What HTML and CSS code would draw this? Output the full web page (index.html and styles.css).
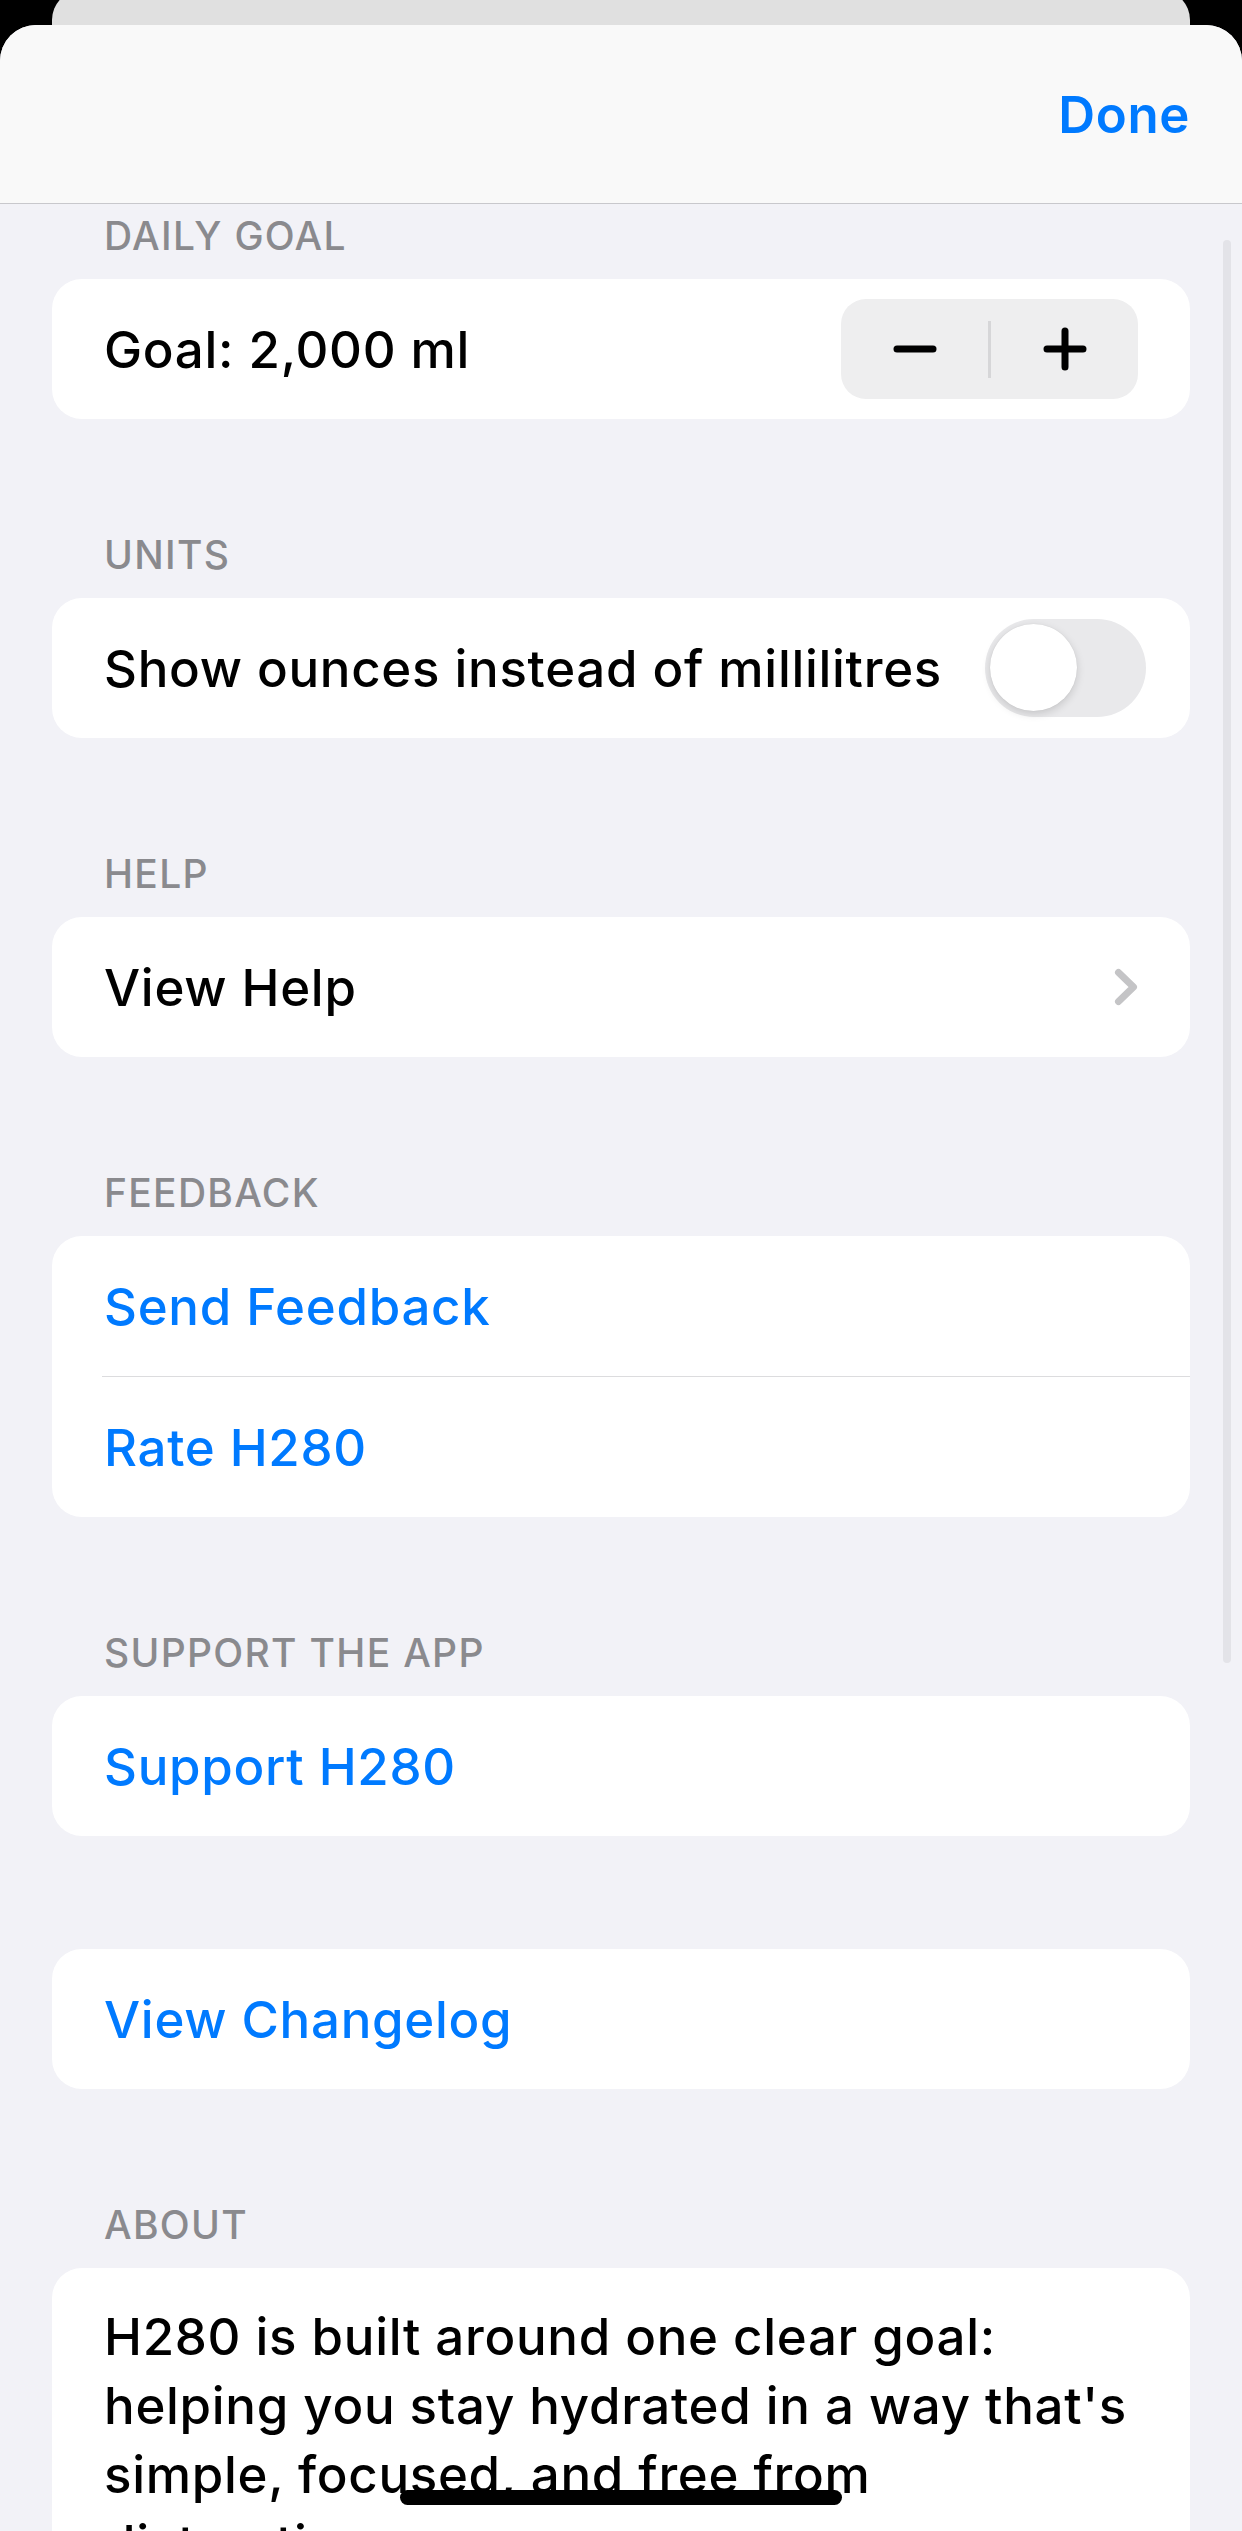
FILE: index.html
```html
<!DOCTYPE html>
<html lang="en">
<head>
  <meta charset="UTF-8" />
  <title>Settings – H280</title>
  <link rel="stylesheet" href="styles.css">
</head>
<body>
  <div class="back-sheet"></div>
  <div class="sheet">
    <div class="nav"><span class="done">Done</span></div>
    <div class="scroll-bar"></div>

    <div class="content">
      <!-- Daily goal -->
      <div class="section-title first">DAILY GOAL</div>
      <div class="card">
        <div class="row">
          <span>Goal: 2,000 ml</span>
          <div class="stepper">
            <span class="step">
              <svg width="44" height="44" viewBox="0 0 44 44"><path d="M4 22H40" stroke="#000" stroke-width="7" stroke-linecap="round"/></svg>
            </span>
            <span class="step-sep"></span>
            <span class="step">
              <svg width="44" height="44" viewBox="0 0 44 44"><path d="M4 22H40M22 4V40" stroke="#000" stroke-width="7" stroke-linecap="round"/></svg>
            </span>
          </div>
        </div>
      </div>

      <!-- Units -->
      <div class="section-title">UNITS</div>
      <div class="card">
        <div class="row">
          <span>Show ounces instead of millilitres</span>
          <div class="switch"><div class="knob"></div></div>
        </div>
      </div>

      <!-- Help -->
      <div class="section-title">HELP</div>
      <div class="card">
        <div class="row">
          <span>View Help</span>
          <svg width="24" height="38" viewBox="0 0 24 38"><path d="M4.5 4.5L19.5 19L4.5 33.5" fill="none" stroke="#c4c4c6" stroke-width="7" stroke-linecap="round" stroke-linejoin="round"/></svg>
        </div>
      </div>

      <!-- Feedback -->
      <div class="section-title">FEEDBACK</div>
      <div class="card">
        <div class="row blue">Send Feedback</div>
        <div class="sep"></div>
        <div class="row blue">Rate H280</div>
      </div>

      <!-- Support -->
      <div class="section-title">SUPPORT THE APP</div>
      <div class="card">
        <div class="row blue">Support H280</div>
      </div>

      <div class="card lone">
        <div class="row blue">View Changelog</div>
      </div>

      <!-- About -->
      <div class="section-title">ABOUT</div>
      <div class="card">
        <p class="about">H280 is built around one clear goal: helping you stay hydrated in a way that's simple, focused, and free from distractions.</p>
      </div>
    </div>
  </div>
  <div class="home-bar"></div>
</body>
</html>
```

FILE: styles.css
```css
body{margin:0;background:#000;font-family:Inter,"Liberation Sans",sans-serif;color:#000}
.back-sheet{height:35px;margin:-10px 52px 0;background:#e0e0e0;border-radius:30px 30px 0 0}
.sheet{position:relative;height:2506px;overflow:hidden;background:#f2f2f7;border-radius:36px 36px 0 0}
.nav{height:179px;box-sizing:border-box;border-bottom:1px solid #c8c8cc;background:#f9f9f9;display:flex;align-items:center;justify-content:flex-end;padding:0 52px}
.done{font-size:51px;font-weight:600;color:#007aff;letter-spacing:.6px}
.scroll-bar{position:absolute;right:11px;top:215px;width:8px;height:1423px;border-radius:4px;background:#e3e3e8}

.content{padding:8px 52px 0}
.section-title{font-size:39px;line-height:47px;font-weight:500;letter-spacing:1.3px;color:#8a8a8e;padding-left:52px;margin:112px 0 20px}
.section-title.first{margin-top:0}
.card{background:#fff;border-radius:30px;overflow:hidden}
.card.lone{margin-top:113px}
.row{height:140px;display:flex;align-items:center;justify-content:space-between;padding:0 52px;font-size:51px;font-weight:500;letter-spacing:.7px}
.blue{color:#007aff}
.sep{height:1px;background:#dcdcde;margin-left:50px}

.stepper{display:flex;align-items:center;width:297px;height:100px;border-radius:25px;background:#eeeeef}
.step{flex:1;display:flex;justify-content:center}
.step svg{display:block}
.step-sep{width:3px;height:57px;background:#d6d6d8}

.switch{width:161px;height:98px;box-sizing:border-box;padding:5px;border-radius:49px;background:#e9e9eb;margin-right:-8px}
.knob{width:87px;height:87px;border-radius:50%;background:#fff;box-shadow:0 3px 8px rgba(0,0,0,.15),0 0 1px rgba(0,0,0,.12)}

.about{margin:0;padding:34px 30px 40px 52px;font-size:51px;line-height:69px;font-weight:500;letter-spacing:.7px}
.home-bar{position:absolute;left:400px;top:2490px;width:442px;height:15px;border-radius:8px;background:#000}
```
